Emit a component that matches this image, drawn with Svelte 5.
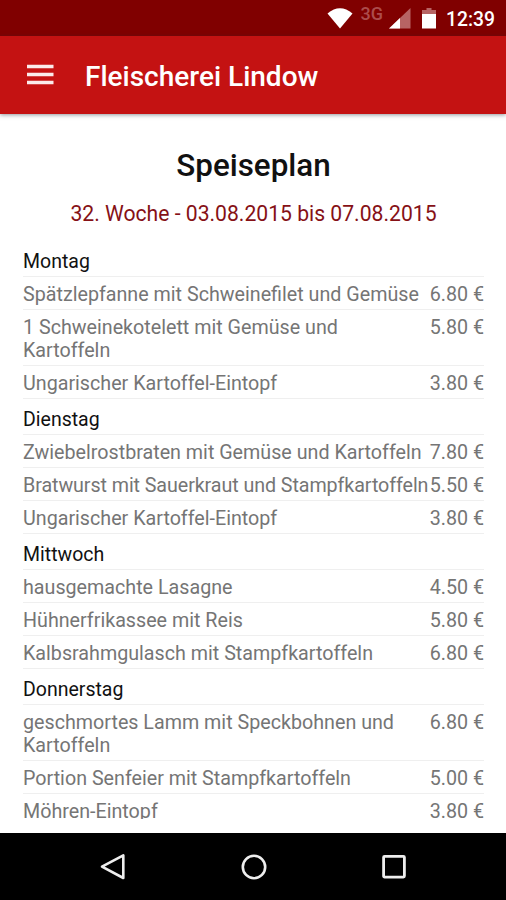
<script lang="ts">
  type Dish = { name: string; price: string; tight?: boolean };
  type Day = { name: string; dishes: Dish[] };

  const title = "Fleischerei Lindow";
  const week = "32. Woche - 03.08.2015 bis 07.08.2015";

  const days: Day[] = [
    {
      name: "Montag",
      dishes: [
        { name: "Spätzlepfanne mit Schweinefilet und Gemüse", price: "6.80" },
        { name: "1 Schweinekotelett mit Gemüse und Kartoffeln", price: "5.80" },
        { name: "Ungarischer Kartoffel-Eintopf", price: "3.80" },
      ],
    },
    {
      name: "Dienstag",
      dishes: [
        { name: "Zwiebelrostbraten mit Gemüse und Kartoffeln", price: "7.80" },
        { name: "Bratwurst mit Sauerkraut und Stampfkartoffeln", price: "5.50", tight: true },
        { name: "Ungarischer Kartoffel-Eintopf", price: "3.80" },
      ],
    },
    {
      name: "Mittwoch",
      dishes: [
        { name: "hausgemachte Lasagne", price: "4.50" },
        { name: "Hühnerfrikassee mit Reis", price: "5.80" },
        { name: "Kalbsrahmgulasch mit Stampfkartoffeln", price: "6.80" },
      ],
    },
    {
      name: "Donnerstag",
      dishes: [
        { name: "geschmortes Lamm mit Speckbohnen und Kartoffeln", price: "6.80" },
        { name: "Portion Senfeier mit Stampfkartoffeln", price: "5.00" },
        { name: "Möhren-Eintopf", price: "3.80" },
      ],
    },
  ];
</script>

<div class="screen">
  <div class="status">
    <svg class="wifi" width="26" height="21" viewBox="0 0 26 21">
      <path d="M0.5 5.5Q13-5 25.5 5.5L13 20.5Z" fill="#fff" />
    </svg>
    <span class="network">3G</span>
    <svg class="signal" width="22" height="21" viewBox="0 0 22 21">
      <path d="M21.5 0V20.5H0Z" fill="#b76464" />
      <path d="M11 10V20.5H0Z" fill="#fff" />
    </svg>
    <svg class="battery" width="14" height="21" viewBox="0 0 14 21">
      <path d="M4.5 0h5v2H14v4H0V2h4.5z" fill="#b76464" />
      <path d="M0 6h14v14.5H0z" fill="#fff" />
    </svg>
    <span class="clock">12:39</span>
  </div>

  <header>
    <button aria-label="Menü">
      <svg width="27" height="21" viewBox="0 0 27 21">
        <path d="M0 2.5h26.5M0 10.5h26.5M0 18.5h26.5" stroke="#fbeaea" stroke-width="3.4" />
      </svg>
    </button>
    <span class="title">{title}</span>
  </header>

  <main>
    <h1>Speiseplan</h1>
    <p class="week">{week}</p>
    {#each days as day}
      <section>
        <h2>{day.name}</h2>
        {#each day.dishes as dish}
          <div class="dish">
            <span class="name" class:tight={dish.tight}>{dish.name}</span>
            <span class="price">{dish.price} €</span>
          </div>
        {/each}
      </section>
    {/each}
  </main>

  <nav>
    <svg width="26" height="28" viewBox="0 0 26 28">
      <path d="M23.3 2.4V25L2 13.7Z" fill="none" stroke="#eee" stroke-width="2.6" stroke-linejoin="round" />
    </svg>
    <svg width="26" height="28" viewBox="0 0 26 28">
      <circle cx="13" cy="14" r="11.2" fill="none" stroke="#eee" stroke-width="2.6" />
    </svg>
    <svg width="26" height="28" viewBox="0 0 26 28">
      <rect x="2.6" y="3.3" width="20.8" height="20.8" rx="1" fill="none" stroke="#eee" stroke-width="2.8" />
    </svg>
  </nav>
</div>

<style>
  .screen {
    display: flex;
    flex-direction: column;
    height: 900px;
    overflow: hidden;
    background: #fff;
    font-family: Roboto, sans-serif;
  }
  svg { display: block; }
  .status {
    display: flex;
    align-items: flex-start;
    height: 36px;
    padding: 8px 11px 0 0;
    box-sizing: border-box;
    justify-content: flex-end;
    background: #800000;
    color: #fff;
  }
  .network {
    margin: -4px 6px 0 8px;
    font-size: 18px;
    line-height: 20px;
    font-weight: 500;
    color: #ac4c4c;
  }
  .battery { margin-left: 11px; }
  .clock {
    margin-left: 10px;
    font-size: 19.3px;
    line-height: 23px;
    font-weight: 500;
  }
  header {
    display: flex;
    flex: none;
    align-items: center;
    height: 78px;
    padding-left: 27px;
    box-sizing: border-box;
    background: #c41212;
    box-shadow: 0 1px 4px rgba(40, 50, 60, 0.5);
  }
  button {
    border: none;
    padding: 0;
    margin: 0 31px 2px 0;
    background: none;
  }
  .title {
    padding-top: 2px;
    font-size: 28px;
    font-weight: 500;
    color: #fff;
  }
  main {
    height: 705px;
    margin: 0 22px 14px 23px;
    overflow: hidden;
  }
  h1 {
    margin: 33px 0 0;
    font-size: 31.4px;
    line-height: 38px;
    font-weight: 500;
    text-align: center;
    color: #111;
  }
  .week {
    margin: 17px 0 15px;
    font-size: 21.15px;
    line-height: 24px;
    text-align: center;
    color: #861116;
  }
  h2 {
    height: 36px;
    margin: 0;
    padding-top: 9px;
    box-sizing: border-box;
    border-bottom: 1px solid #efefef;
    font-size: 19.5px;
    line-height: 23px;
    font-weight: 400;
    color: #111;
  }
  .dish {
    display: grid;
    grid-template-columns: 406px 55px;
    padding: 6px 0 3px;
    border-bottom: 1px solid #efefef;
    font-size: 19.7px;
    line-height: 23px;
    color: #757575;
  }
  .tight {
    letter-spacing: -0.08px;
    white-space: nowrap;
  }
  .price {
    text-align: right;
    white-space: nowrap;
  }
  nav {
    display: flex;
    justify-content: space-between;
    align-items: center;
    height: 67px;
    padding: 0 99px 0 100px;
    background: #000;
  }
</style>
